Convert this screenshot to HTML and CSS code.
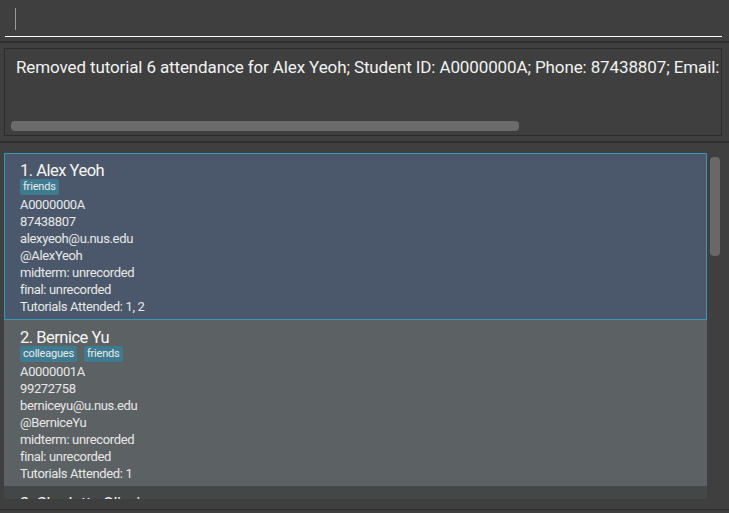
FILE: index.html
```html
<!DOCTYPE html>
<html>
<head>
<meta charset="utf-8">
<link rel="stylesheet" href="styles.css">
</head>
<body>
<div class="app">
  <div class="command">
    <div class="command-field"><span class="caret"></span></div>
  </div>
  <div class="sep"></div>
  <div class="result-wrap">
    <div class="result">
      <div class="result-text">Removed tutorial 6 attendance for Alex Yeoh; Student ID: A0000000A; Phone: 87438807; Email: alexyeoh@u.nus.edu</div>
      <div class="hscroll"><div class="hthumb"></div></div>
    </div>
  </div>
  <div class="sep"></div>
  <div class="list-pane">
    <div class="list">
      <div class="card selected">
        <div class="name">1. Alex Yeoh</div>
        <div class="tags"><span class="tag">friends</span></div>
        <div class="line">A0000000A</div>
        <div class="line">87438807</div>
        <div class="line">alexyeoh@u.nus.edu</div>
        <div class="line">@AlexYeoh</div>
        <div class="line">midterm: unrecorded</div>
        <div class="line">final: unrecorded</div>
        <div class="line">Tutorials Attended: 1, 2</div>
      </div>
      <div class="card odd">
        <div class="name">2. Bernice Yu</div>
        <div class="tags"><span class="tag">colleagues</span><span class="tag">friends</span></div>
        <div class="line">A0000001A</div>
        <div class="line">99272758</div>
        <div class="line">berniceyu@u.nus.edu</div>
        <div class="line">@BerniceYu</div>
        <div class="line">midterm: unrecorded</div>
        <div class="line">final: unrecorded</div>
        <div class="line">Tutorials Attended: 1</div>
      </div>
      <div class="card even">
        <div class="name">3. Charlotte Oliveiro</div>
      </div>
    </div>
    <div class="vscroll"><div class="vthumb"></div></div>
  </div>
  <div class="status"></div>
</div>
</body>
</html>
```

FILE: styles.css
```css
html, body {
  margin: 0;
  padding: 0;
  background: #3f3f3f;
  font-family: Roboto, "Liberation Sans", sans-serif;
  color: #ffffff;
  overflow: hidden;
}
.app {
  width: 729px;
  height: 513px;
  display: flex;
  flex-direction: column;
}
.command {
  height: 42px;
  padding: 0 7px 0 5px;
  box-sizing: border-box;
}
.command-field {
  height: 37px;
  border-bottom: 1px solid #ffffff;
  box-sizing: border-box;
  padding: 8px 0 0 10px;
}
.caret {
  display: block;
  width: 1px;
  height: 22px;
  background: #9a9a9a;
}
.sep {
  height: 2px;
  background: #2e2e2e;
  flex: none;
}
.result-wrap {
  height: 98px;
  padding: 5px 7px 5px 4px;
  box-sizing: border-box;
}
.result {
  height: 88px;
  border: 1px solid #2c2c2c;
  box-sizing: border-box;
  overflow: hidden;
  display: flex;
  flex-direction: column;
}
.result-text {
  white-space: nowrap;
  font-size: 17px;
  letter-spacing: -0.12px;
  padding: 8px 0 0 11px;
  line-height: 20px;
  color: #f2f2f2;
}
.hscroll {
  margin-top: auto;
  padding: 0 0 4px 6px;
}
.hthumb {
  width: 508px;
  height: 10px;
  border-radius: 4px;
  background: #6b6b6b;
}
.list-pane {
  height: 356px;
  display: flex;
  padding: 10px 0 0 4px;
  box-sizing: border-box;
}
.list {
  width: 703px;
  height: 346px;
  overflow: hidden;
  flex: none;
}
.card {
  padding: 5px 15px 5px 15px;
  border: 1px solid transparent;
  height: 167px;
  box-sizing: border-box;
}
.card.selected {
  background: #4b586b;
  border-color: #3a96b6;
}
.card.odd {
  background: #5c6164;
  border-color: #5c6164;
  height: 166px;
}
.card.even {
  background: #434748;
  border-color: #434748;
}
.name {
  font-size: 16.5px;
  letter-spacing: -0.5px;
  line-height: 24px;
  height: 20px;
  color: #f6f6f6;
}
.tags {
  display: flex;
  gap: 7px;
  height: 17px;
}
.tag {
  background: #3e7b91;
  color: #eaeaea;
  font-size: 11px;
  letter-spacing: -0.2px;
  line-height: 16px;
  height: 16px;
  padding: 0 3px;
  border-radius: 2px;
}
.line {
  font-size: 13px;
  letter-spacing: -0.35px;
  line-height: 17px;
  color: #e8e8e8;
}
.vscroll {
  padding: 4px 0 0 3px;
}
.vthumb {
  width: 10px;
  height: 99px;
  border-radius: 4px;
  background: #686868;
}
.status {
  flex: none;
  height: 3px;
  border-top: 1px solid #2e2e2e;
  margin-top: 10px;
}
```
